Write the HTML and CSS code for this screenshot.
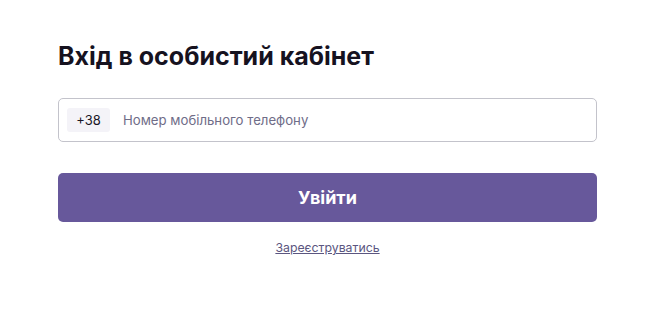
FILE: index.html
```html
<!DOCTYPE html>
<html lang="uk">
<head>
<meta charset="utf-8">
<link rel="stylesheet" href="styles.css">
</head>
<body>
<main class="login">
  <h1 class="title">Вхід в особистий кабінет</h1>
  <div class="phone-field">
    <span class="prefix">+38</span>
    <span class="placeholder">Номер мобільного телефону</span>
  </div>
  <button class="submit">Увійти</button>
  <div class="register"><a href="#">Зареєструватись</a></div>
</main>
</body>
</html>
```

FILE: styles.css
```css
html, body {
  margin: 0;
  padding: 0;
  background: #ffffff;
}
body {
  font-family: Inter, "Noto Sans", sans-serif;
  color: #1b1726;
}
.login {
  width: 539px;
  margin-left: 58px;
  padding-top: 39px;
  display: flex;
  flex-direction: column;
}
.title {
  margin: 0;
  font-size: 25px;
  line-height: 34px;
  font-weight: 700;
  letter-spacing: 0;
  color: #16121f;
}
.phone-field {
  margin-top: 25px;
  height: 44px;
  box-sizing: border-box;
  border: 1px solid #c3c3cb;
  border-radius: 5px;
  display: flex;
  align-items: center;
  padding-left: 8px;
}
.prefix {
  background: #f4f3f8;
  border-radius: 3px;
  width: 43px;
  height: 24px;
  display: flex;
  align-items: center;
  justify-content: center;
  font-size: 13px;
  color: #1b1726;
}
.placeholder {
  margin-left: 13px;
  font-size: 13.2px;
  color: #6f6d88;
}
.submit {
  margin-top: 31px;
  height: 49px;
  border: none;
  border-radius: 5px;
  background: #67589b;
  color: #ffffff;
  font-family: Inter, "Noto Sans", sans-serif;
  font-size: 18px;
  font-weight: 700;
  padding: 0;
}
.register {
  margin-top: 18px;
  text-align: center;
  font-size: 12.3px;
  line-height: 16px;
}
.register a {
  color: #5b5680;
  text-decoration: underline;
}
```
